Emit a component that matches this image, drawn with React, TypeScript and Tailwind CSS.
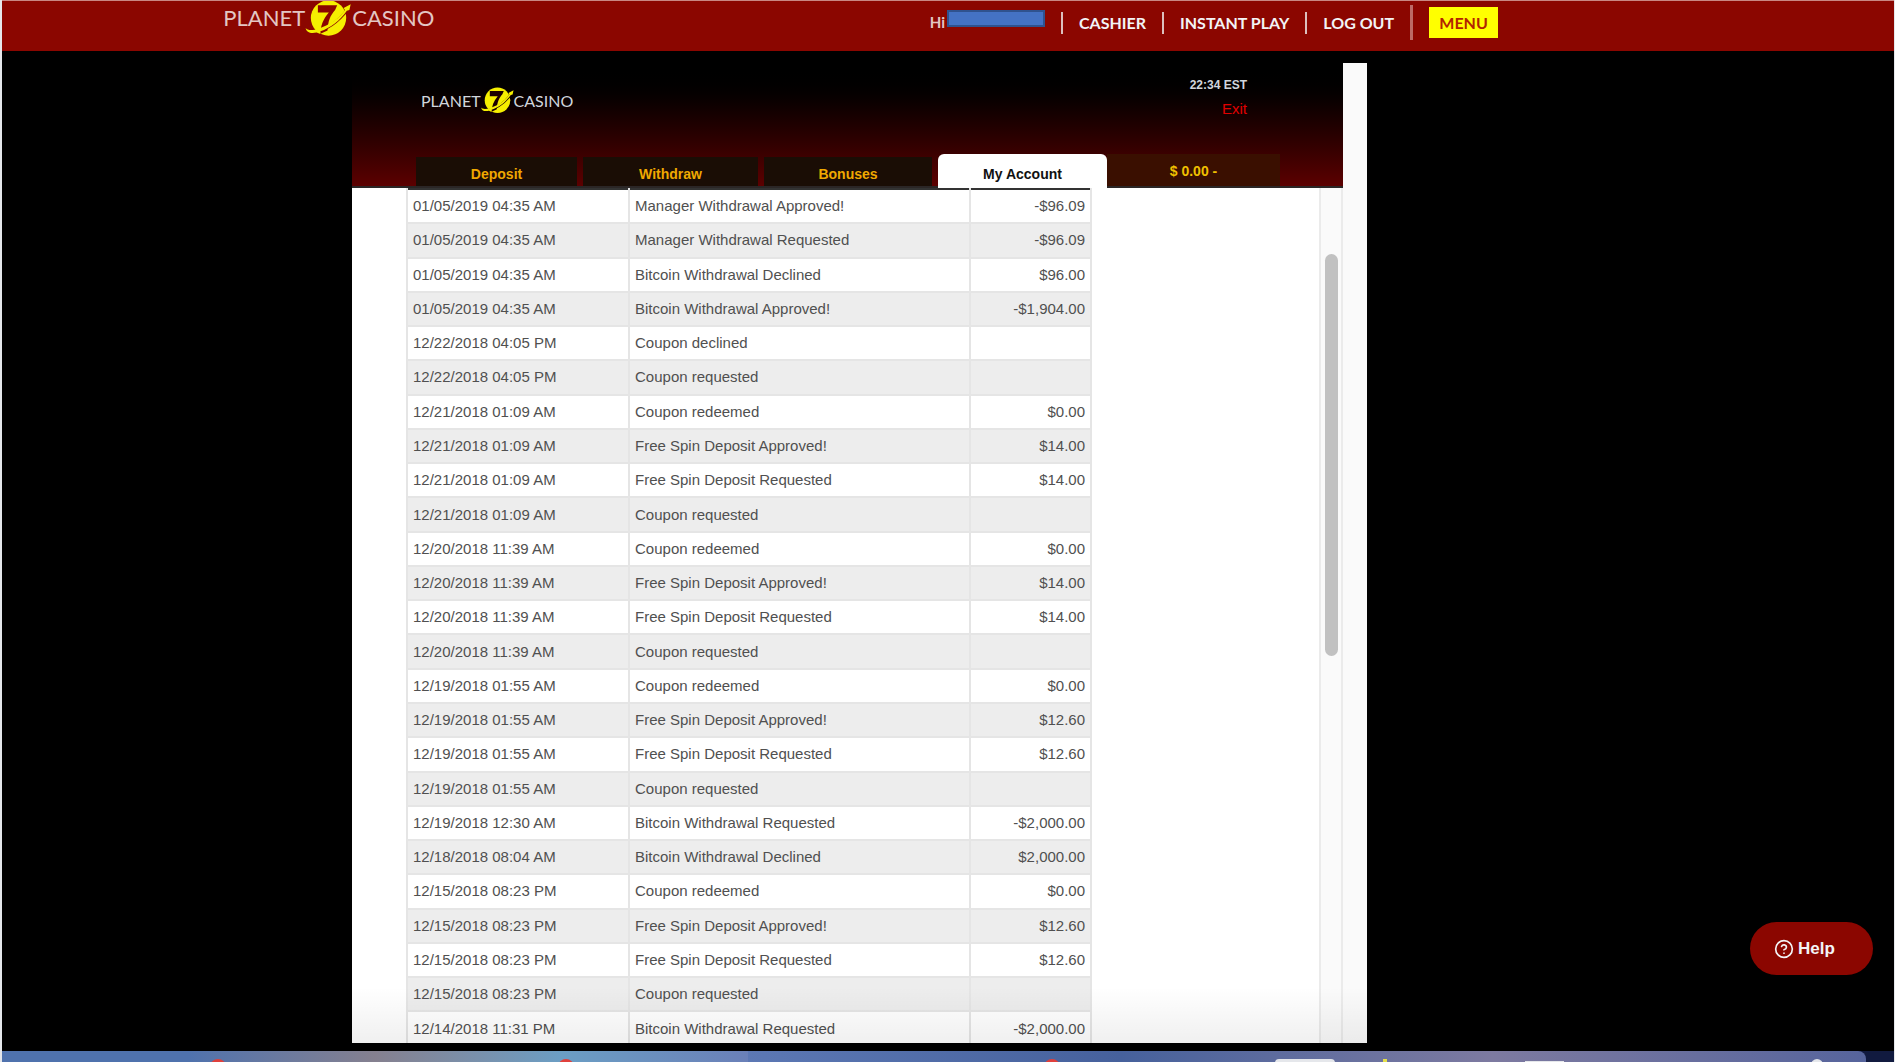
import { CircleHelp } from "lucide-react";
import { clsx } from "clsx";

type Transaction = {
  date: string;
  description: string;
  amount: string;
};

const TRANSACTIONS: Transaction[] = [
  { date: "01/05/2019 04:35 AM", description: "Manager Withdrawal Approved!", amount: "-$96.09" },
  { date: "01/05/2019 04:35 AM", description: "Manager Withdrawal Requested", amount: "-$96.09" },
  { date: "01/05/2019 04:35 AM", description: "Bitcoin Withdrawal Declined", amount: "$96.00" },
  { date: "01/05/2019 04:35 AM", description: "Bitcoin Withdrawal Approved!", amount: "-$1,904.00" },
  { date: "12/22/2018 04:05 PM", description: "Coupon declined", amount: "" },
  { date: "12/22/2018 04:05 PM", description: "Coupon requested", amount: "" },
  { date: "12/21/2018 01:09 AM", description: "Coupon redeemed", amount: "$0.00" },
  { date: "12/21/2018 01:09 AM", description: "Free Spin Deposit Approved!", amount: "$14.00" },
  { date: "12/21/2018 01:09 AM", description: "Free Spin Deposit Requested", amount: "$14.00" },
  { date: "12/21/2018 01:09 AM", description: "Coupon requested", amount: "" },
  { date: "12/20/2018 11:39 AM", description: "Coupon redeemed", amount: "$0.00" },
  { date: "12/20/2018 11:39 AM", description: "Free Spin Deposit Approved!", amount: "$14.00" },
  { date: "12/20/2018 11:39 AM", description: "Free Spin Deposit Requested", amount: "$14.00" },
  { date: "12/20/2018 11:39 AM", description: "Coupon requested", amount: "" },
  { date: "12/19/2018 01:55 AM", description: "Coupon redeemed", amount: "$0.00" },
  { date: "12/19/2018 01:55 AM", description: "Free Spin Deposit Approved!", amount: "$12.60" },
  { date: "12/19/2018 01:55 AM", description: "Free Spin Deposit Requested", amount: "$12.60" },
  { date: "12/19/2018 01:55 AM", description: "Coupon requested", amount: "" },
  { date: "12/19/2018 12:30 AM", description: "Bitcoin Withdrawal Requested", amount: "-$2,000.00" },
  { date: "12/18/2018 08:04 AM", description: "Bitcoin Withdrawal Declined", amount: "$2,000.00" },
  { date: "12/15/2018 08:23 PM", description: "Coupon redeemed", amount: "$0.00" },
  { date: "12/15/2018 08:23 PM", description: "Free Spin Deposit Approved!", amount: "$12.60" },
  { date: "12/15/2018 08:23 PM", description: "Free Spin Deposit Requested", amount: "$12.60" },
  { date: "12/15/2018 08:23 PM", description: "Coupon requested", amount: "" },
  { date: "12/14/2018 11:31 PM", description: "Bitcoin Withdrawal Requested", amount: "-$2,000.00" },
];

export default function App() {
  return (
    <div className="relative flex h-screen flex-col overflow-hidden border-l-2 border-r border-gray-200 bg-black font-['Liberation_Sans',Arial,sans-serif]">
      <SiteHeader />

      <main className="flex min-h-0 flex-1 pt-3 pb-2 pl-[18.5%]">
        <CashierPanel />
      </main>

      <Dock />

      <button
        type="button"
        className="absolute right-[21px] bottom-[87px] flex h-[53px] w-[123px] items-center gap-1 rounded-full bg-[#8b0600] pl-6 text-[17px] font-bold text-gray-100"
      >
        <CircleHelp className="size-5" strokeWidth={2} />
        Help
      </button>
    </div>
  );
}

function SiteHeader() {
  return (
    <header className="flex h-[51px] shrink-0 items-start border-t border-[#c98783] bg-[#8b0600] pl-[11.7%] font-[Lato,sans-serif]">
      <a href="#home" className="flex text-[22px] leading-[34px] text-[#e3c6c4]">
        PLANET
        <PlanetSeven className="h-9 w-[47px]" cutClass="fill-[#8b0600]" ringClass="stroke-[#8b0600]" />
        CASINO
      </a>

      <nav className="ml-auto flex items-center pt-1 pr-[23.7%] text-base leading-none font-bold text-gray-100">
        <span className="flex items-center text-[15px] text-[#e3c6c4]">
          Hi
          <span className="mb-2 ml-0.5 h-[17px] w-[98px] border-2 border-[#2f528f] bg-[#4472c4]" />
        </span>
        <NavDivider />
        <a href="#cashier">CASHIER</a>
        <NavDivider />
        <a href="#play">INSTANT PLAY</a>
        <NavDivider />
        <a href="#logout">LOG OUT</a>
        <span className="mx-4 h-[35px] w-[3px] bg-[#bd6a66]" />
        <button type="button" className="h-[31px] w-[69px] bg-[#ffff00] font-bold text-[#b32400]">
          MENU
        </button>
      </nav>
    </header>
  );
}

function NavDivider() {
  return <span className="mx-4 h-[22px] w-0.5 bg-[#dcc0be]" />;
}

function CashierPanel() {
  return (
    <section className="relative flex w-full max-w-[1015px] bg-[#fafafa]">
      <div className="flex min-w-0 flex-1 flex-col">
        <div className="flex h-[125px] shrink-0 flex-col justify-between border-b-2 border-[#2b2626] bg-linear-to-b from-black via-[#1f0000] to-[#5c0000]">
          <div className="flex justify-between pt-4 pr-24 pl-[69px]">
            <a href="#cashier" className="flex items-center pt-1 font-[Lato,sans-serif] text-base text-gray-300">
              PLANET
              <PlanetSeven className="h-[28px] w-[33px]" cutClass="fill-[#1c0000]" ringClass="stroke-[#1c0000]" />
              CASINO
            </a>
            <div className="flex flex-col items-end">
              <span className="text-xs leading-3 font-bold text-gray-300">22:34 EST</span>
              <a href="#exit" className="mt-2 text-[15px] leading-5 text-[#e00000]">
                Exit
              </a>
            </div>
          </div>

          <nav className="flex items-end pl-16 text-sm font-bold">
            <CashierTab label="Deposit" className="w-[161px]" />
            <CashierTab label="Withdraw" className="w-[175px]" />
            <CashierTab label="Bonuses" className="w-[168px]" />
            <CashierTab label="My Account" active className="w-[169px]" />
            <button
              type="button"
              className="h-8 w-[173px] bg-[#3a0f00] pt-0.5 text-sm font-bold text-[#f0c000]"
            >
              $ 0.00 -
            </button>
          </nav>
        </div>

        <div className="flex min-h-0 flex-1 bg-white">
          <div className="min-h-0 flex-1 overflow-hidden pl-[54px]">
            <TransactionTable />
          </div>
          <div className="w-6 border-x-2 border-[#ebebeb] bg-[#fafafa] pt-[66px]">
            <div className="mx-auto h-[402px] w-[13px] rounded-full bg-[#c1c1c1]" />
          </div>
        </div>
      </div>

      <div className="w-6" />
      <div className="pointer-events-none absolute inset-x-0 bottom-0 h-14 bg-linear-to-b from-transparent to-black/6" />
    </section>
  );
}

function CashierTab({
  label,
  active,
  className,
}: {
  label: string;
  active?: boolean;
  className: string;
}) {
  return (
    <button
      type="button"
      className={clsx(
        "font-bold",
        active
          ? "-mb-0.5 h-[34px] rounded-t-md bg-white pt-1.5 text-[#111111]"
          : "mr-1.5 h-[29px] bg-[#1a0d05] pt-1 text-[#f0a800]",
        className,
      )}
    >
      {label}
    </button>
  );
}

function TransactionTable() {
  return (
    <table className="h-[859px] w-[684px] table-fixed border-collapse border-t-2 border-[#333333] text-[15px] leading-5 text-[#505050]">
      <colgroup>
        <col className="w-[222px]" />
        <col className="w-[341px]" />
        <col className="w-[121px]" />
      </colgroup>
      <tbody>
        {TRANSACTIONS.map((item, index) => (
          <tr key={index} className="odd:bg-white even:bg-[#ededed]">
            <td className="border-2 border-t-0 border-[#e5e5e5] px-[5px] py-0">{item.date}</td>
            <td className="border-2 border-t-0 border-[#e5e5e5] px-[5px] py-0">{item.description}</td>
            <td className="border-2 border-t-0 border-[#e5e5e5] px-[5px] py-0 text-right">{item.amount}</td>
          </tr>
        ))}
      </tbody>
    </table>
  );
}

function PlanetSeven({
  className,
  cutClass,
  ringClass,
}: {
  className: string;
  cutClass: string;
  ringClass: string;
}) {
  return (
    <svg viewBox="0 0 142 112" className={className} aria-hidden="true">
      <circle cx="71" cy="53" r="55" className="fill-[#f5ef00]" />
      <path d="M38 13h60l-6 14C76 46 70 60 68 92L46 102c0-22 8-46 26-66H38z" className={cutClass} />
      <path d="M20 98c44-6 84-36 112-74" fill="none" strokeWidth="9" className={ringClass} />
      <path
        d="M0 84c6 8 22 8 40 2 36-12 66-34 82-58l-4-6 22-12-4 18-8 2C108 60 76 84 46 94l-2 8-10-4C16 102 2 98 0 84z"
        className="fill-[#f5ef00]"
      />
    </svg>
  );
}

// Top edge of the desktop dock peeking out under the page
function Dock() {
  return (
    <footer className="relative h-[11px] shrink-0 overflow-hidden bg-[#111a3f]">
      <div className="flex h-full pr-7">
        <div className="h-full w-1/5 bg-linear-to-r from-[#4f72ad] from-50% to-[#85808f]" />
        <div className="h-full w-1/5 bg-linear-to-r from-[#85808f] via-[#6b9ec4] to-[#6a80b8]" />
        <div className="h-full w-2/5 bg-linear-to-r from-[#5c78b4] via-[#46619c] to-[#7d7aa0]" />
        <div className="h-full w-1/5 rounded-tr-lg bg-linear-to-r from-[#7d7aa0] to-[#56649c]" />
      </div>
      <span className="absolute top-2 left-[11%] size-4 rounded-full bg-[#e0403c]" />
      <span className="absolute top-2 left-[29.4%] size-4 rounded-full bg-[#e0403c]" />
      <span className="absolute top-2 left-[55.1%] size-4 rounded-full bg-[#e0403c]" />
      <span className="absolute top-2 left-[67.3%] h-4 w-[60px] rounded bg-gray-200" />
      <span className="absolute top-2 left-[73%] h-4 w-1 bg-[#e5e04a]" />
      <span className="absolute top-2.5 left-[80.5%] h-4 w-[39px] bg-gray-200" />
      <span className="absolute top-2 left-[95.6%] h-4 w-3 rounded-full bg-gray-200" />
    </footer>
  );
}
